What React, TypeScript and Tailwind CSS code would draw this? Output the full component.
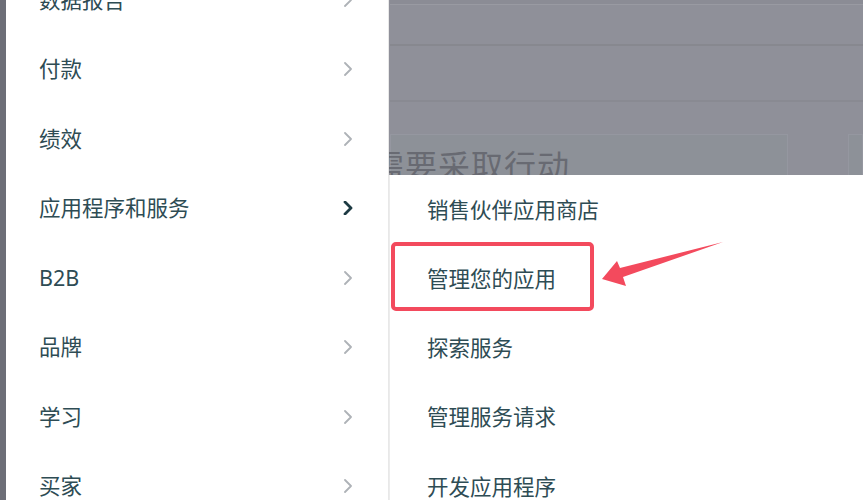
import React from "react";

const mainItems = ["数据报告", "付款", "绩效", "应用程序和服务", "B2B", "品牌", "学习", "买家"];
const subItems = ["销售伙伴应用商店", "管理您的应用", "探索服务", "管理服务请求", "开发应用程序"];

function Chevron({ active }: { active?: boolean }) {
  return (
    <svg width="12" height="14" viewBox="0 0 12 14" fill="none">
      <polyline
        points="3,1 9,7 3,13"
        stroke={active ? "#1d3a43" : "#aeb2b7"}
        strokeWidth={active ? 2.8 : 1.8}
        strokeLinecap="round"
        strokeLinejoin="round"
      />
    </svg>
  );
}

export default function App() {
  return (
    <div
      className="relative w-[863px] h-[500px] overflow-hidden bg-[#8f9099]"
      style={{ fontFamily: '"Noto Sans", "Noto Sans CJK SC", sans-serif' }}
    >
      {/* dimmed page behind the menu */}
      <div className="flex flex-col pl-[390px]">
        <div className="h-[5px] bg-[#8b8c95] border-b border-[#999aa2]" />
        <div className="h-[41px] border-b-2 border-[#87888f]" />
        <div className="h-[56px] border-b-2 border-[#898a92]" />
        <div className="h-[32px]" />
        <div className="flex gap-[60px] h-[100px]">
          <div className="w-[398px] bg-[#8d9198] border border-[#9597a0]" />
          <div className="flex-1 bg-[#8d9198] border border-[#9597a0]" />
        </div>
      </div>
      <div className="absolute left-[372px] top-[150px] text-[32px] leading-none text-[#686a72] tracking-[1px]">
        需要采取行动
      </div>

      {/* left strip */}
      <div className="absolute left-0 top-0 w-[6px] h-full bg-[#6d6e77]" />

      {/* main menu */}
      <div className="absolute left-[6px] top-0 w-[383px] h-full bg-white border-r border-[#e8e8e8]">
        <div className="mt-[-35px] flex flex-col">
          {mainItems.map((item) => {
            const active = item === "应用程序和服务";
            return (
              <div key={item} className="h-[69.5px] flex items-center justify-between pl-[33px] pr-[34px]">
                <span className="text-[21.5px] text-[#2e4c54]">{item}</span>
                <Chevron active={active} />
              </div>
            );
          })}
        </div>
      </div>

      {/* submenu */}
      <div className="absolute left-[389px] top-[175px] right-0 bottom-0 bg-white border-l border-[#ececec]">
        <div className="flex flex-col">
          {subItems.map((item) => (
            <div key={item} className="h-[69.25px] flex items-center pl-[37px]">
              <span className="text-[21.5px] text-[#2e4c54]">{item}</span>
            </div>
          ))}
        </div>
      </div>

      {/* annotation */}
      <div className="absolute left-[391px] top-[242px] w-[203px] h-[69px] border-4 border-[#f34a5d] rounded-[5px]" />
      <svg className="absolute left-0 top-0" width="863" height="500">
        <polygon
          points="602,279 617,261 620,268 723,242 623,277 626,286"
          fill="#f34a5d"
        />
      </svg>
    </div>
  );
}
